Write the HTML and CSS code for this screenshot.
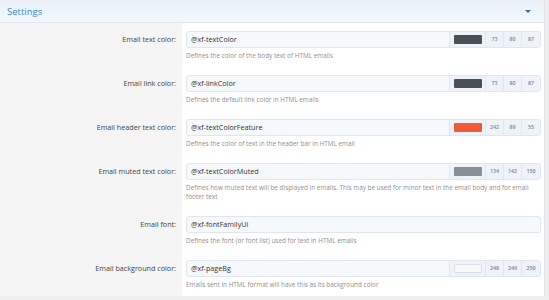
FILE: index.html
```html
<!DOCTYPE html>
<html lang="en">
<head>
  <meta charset="UTF-8" />
  <title>Email style properties</title>
  <link rel="stylesheet" href="styles.css">
</head>
<body>
  <div class="block">
    <h2 class="block-header">
      <span>Settings</span>
      <span class="toggle"></span>
    </h2>

    <div class="form-row">
      <div class="row-label">Email text color:</div>
      <div class="row-input">
        <div class="input-group">
          <div class="input">@xf-textColor</div>
          <div class="addon">
            <span class="swatch-cell"><span class="swatch" style="background: rgb(73, 80, 87)"></span></span>
            <span class="num">73</span><span class="num">80</span><span class="num">87</span>
          </div>
        </div>
        <div class="explain">Defines the color of the body text of HTML emails</div>
      </div>
    </div>

    <div class="form-row">
      <div class="row-label">Email link color:</div>
      <div class="row-input">
        <div class="input-group">
          <div class="input">@xf-linkColor</div>
          <div class="addon">
            <span class="swatch-cell"><span class="swatch" style="background: rgb(73, 80, 87)"></span></span>
            <span class="num">73</span><span class="num">80</span><span class="num">87</span>
          </div>
        </div>
        <div class="explain">Defines the default link color in HTML emails</div>
      </div>
    </div>

    <div class="form-row">
      <div class="row-label">Email header text color:</div>
      <div class="row-input">
        <div class="input-group">
          <div class="input">@xf-textColorFeature</div>
          <div class="addon">
            <span class="swatch-cell"><span class="swatch" style="background: rgb(242, 89, 55)"></span></span>
            <span class="num">242</span><span class="num">89</span><span class="num">55</span>
          </div>
        </div>
        <div class="explain">Defines the color of text in the header bar in HTML email</div>
      </div>
    </div>

    <div class="form-row">
      <div class="row-label">Email muted text color:</div>
      <div class="row-input">
        <div class="input-group">
          <div class="input">@xf-textColorMuted</div>
          <div class="addon">
            <span class="swatch-cell"><span class="swatch" style="background: rgb(134, 142, 150)"></span></span>
            <span class="num">134</span><span class="num">142</span><span class="num">150</span>
          </div>
        </div>
        <div class="explain">Defines how muted text will be displayed in emails. This may be used for minor text in the email body and for email footer text</div>
      </div>
    </div>

    <div class="form-row">
      <div class="row-label">Email font:</div>
      <div class="row-input">
        <div class="input-group">
          <div class="input">@xf-fontFamilyUi</div>
        </div>
        <div class="explain">Defines the font (or font list) used for text in HTML emails</div>
      </div>
    </div>

    <div class="form-row">
      <div class="row-label">Email background color:</div>
      <div class="row-input">
        <div class="input-group">
          <div class="input">@xf-pageBg</div>
          <div class="addon">
            <span class="swatch-cell"><span class="swatch light" style="background: rgb(248, 249, 250)"></span></span>
            <span class="num">248</span><span class="num">249</span><span class="num">250</span>
          </div>
        </div>
        <div class="explain">Emails sent in HTML format will have this as its background color</div>
      </div>
    </div>
  </div>
</body>
</html>
```

FILE: styles.css
```css
html, body {
  margin: 0;
  background: #efefef;
  font-family: 'Open Sans', 'Noto Sans', sans-serif;
  color: #3c3c3c;
}
.block {
  width: 544px;
  margin-top: 1px;
  background: #fff;
  border-right: 1px solid #dfe4ea;
  overflow: hidden;
}
.block-header {
  margin: 0;
  height: 21px;
  display: flex;
  align-items: center;
  justify-content: space-between;
  padding: 0 13px 0 7px;
  font-size: 9.5px;
  font-weight: normal;
  color: #3f86c8;
  background: linear-gradient(to bottom, #e7f1fb, #f3f8fd);
  border-bottom: 1px solid #dbe5ef;
}
.toggle {
  width: 0;
  height: 0;
  border-left: 3px solid transparent;
  border-right: 3px solid transparent;
  border-top: 3px solid #2d6fae;
}
.form-row {
  display: grid;
  grid-template-columns: 182px 1fr;
}
.row-label {
  background: #f5f5f5;
  text-align: right;
  padding: 8px 6px 0 0;
  line-height: 17px;
  font-size: 7.2px;
  color: #444;
}
.row-input {
  padding: 8px 3px 7px 4px;
}
.input-group {
  display: flex;
  height: 17px;
  box-sizing: border-box;
  border: 1px solid #dfe6ee;
  border-radius: 3px;
  background: #f6f9fc;
  overflow: hidden;
}
.input {
  flex: 1;
  padding-left: 4px;
  line-height: 15px;
  font-size: 7.2px;
  color: #333;
}
.addon {
  display: flex;
  background: #edf3f9;
  border-left: 1px solid #e0e7ef;
}
.swatch-cell {
  width: 35px;
  display: flex;
  align-items: center;
  justify-content: center;
  border-right: 1px solid #e0e7ef;
}
.swatch {
  width: 28px;
  height: 9px;
  border-radius: 1px;
}
.swatch.light {
  box-sizing: border-box;
  border: 1px solid #d8dee5;
}
.num {
  width: 17px;
  text-align: center;
  line-height: 15px;
  font-size: 5.4px;
  font-weight: 600;
  color: #7d8791;
  border-right: 1px solid #e0e7ef;
}
.num:last-child {
  border-right: none;
  width: 18px;
}
.explain {
  margin-top: 3px;
  font-size: 6.4px;
  line-height: 9px;
  color: #8f8f8f;
}
```
